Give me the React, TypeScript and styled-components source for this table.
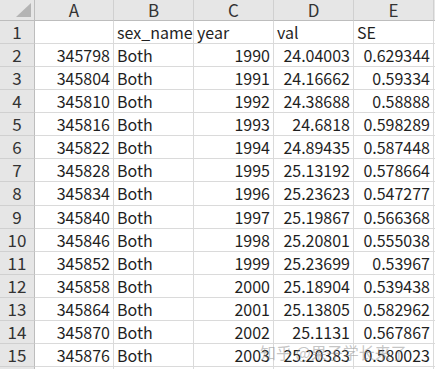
import { Fragment } from 'react';
import styled, { createGlobalStyle } from 'styled-components';

const GlobalStyle = createGlobalStyle`
	body {
		margin: 0;
		background: #ffffff;
		overflow: hidden;
	}
`;

type Row = {
	id: number;
	location: string;
	sex: string;
	year: string;
	val: string;
	se: string;
};

const header: Row = { id: 1, location: '', sex: 'sex_name', year: 'year', val: 'val', se: 'SE' };

const rows: Row[] = [
	{ id: 2, location: '345798', sex: 'Both', year: '1990', val: '24.04003', se: '0.629344' },
	{ id: 3, location: '345804', sex: 'Both', year: '1991', val: '24.16662', se: '0.59334' },
	{ id: 4, location: '345810', sex: 'Both', year: '1992', val: '24.38688', se: '0.58888' },
	{ id: 5, location: '345816', sex: 'Both', year: '1993', val: '24.6818', se: '0.598289' },
	{ id: 6, location: '345822', sex: 'Both', year: '1994', val: '24.89435', se: '0.587448' },
	{ id: 7, location: '345828', sex: 'Both', year: '1995', val: '25.13192', se: '0.578664' },
	{ id: 8, location: '345834', sex: 'Both', year: '1996', val: '25.23623', se: '0.547277' },
	{ id: 9, location: '345840', sex: 'Both', year: '1997', val: '25.19867', se: '0.566368' },
	{ id: 10, location: '345846', sex: 'Both', year: '1998', val: '25.20801', se: '0.555038' },
	{ id: 11, location: '345852', sex: 'Both', year: '1999', val: '25.23699', se: '0.53967' },
	{ id: 12, location: '345858', sex: 'Both', year: '2000', val: '25.18904', se: '0.539438' },
	{ id: 13, location: '345864', sex: 'Both', year: '2001', val: '25.13805', se: '0.582962' },
	{ id: 14, location: '345870', sex: 'Both', year: '2002', val: '25.1131', se: '0.567867' },
	{ id: 15, location: '345876', sex: 'Both', year: '2003', val: '25.20383', se: '0.580023' },
	{ id: 16, location: '', sex: '', year: '', val: '', se: '' },
];

const columns = ['A', 'B', 'C', 'D', 'E'];

const Sheet = styled.div`
	position: relative;
	display: grid;
	grid-template-columns: 35px 79px 80px 80px 80px 80px 80px;
	grid-template-rows: 21px;
	grid-auto-rows: 23.07px;
	font-family: 'Noto Sans CJK SC', 'Noto Sans', sans-serif;
	font-size: 16px;
	color: #1f1f1f;
	width: 435px;
	height: 369px;
	overflow: hidden;
`;

const Corner = styled.div`
	position: relative;
	background: #e6e6e6;
	border-right: 1px solid #bdbdbd;
	border-bottom: 1px solid #bdbdbd;
	box-sizing: border-box;

	&::after {
		content: '';
		position: absolute;
		right: 3px;
		bottom: 3px;
		width: 0;
		height: 0;
		border-left: 15px solid transparent;
		border-bottom: 14px solid #b4b4b4;
	}
`;

const ColHeader = styled.div`
	display: flex;
	align-items: center;
	justify-content: center;
	background: #e6e6e6;
	border-right: 1px solid #d0d0d0;
	border-bottom: 1px solid #bdbdbd;
	box-sizing: border-box;
	color: #333333;
	font-size: 17px;
	line-height: 20px;
`;

const RowHeader = styled.div`
	display: flex;
	align-items: center;
	justify-content: center;
	background: #e6e6e6;
	border-right: 1px solid #bdbdbd;
	border-bottom: 1px solid #d0d0d0;
	box-sizing: border-box;
	color: #333333;
	font-size: 17px;
	line-height: 22px;
`;

const Cell = styled.div<{ $align: 'left' | 'right' }>`
	display: flex;
	align-items: center;
	justify-content: ${(props) => (props.$align === 'right' ? 'flex-end' : 'flex-start')};
	padding: 0 3px;
	border-right: 1px solid #dadada;
	border-bottom: 1px solid #dadada;
	box-sizing: border-box;
	white-space: nowrap;
	line-height: 22px;
`;

const Watermark = styled.div`
	position: absolute;
	left: 260px;
	top: 342px;
	font-family: 'Noto Sans CJK SC', sans-serif;
	font-size: 16px;
	line-height: 20px;
	color: rgba(140, 140, 140, 0.5);
	white-space: nowrap;
	pointer-events: none;
`;

const App = () => {
	const renderRow = (row: Row, isHeader: boolean) => (
		<Fragment key={row.id}>
			<RowHeader>{row.id}</RowHeader>
			<Cell $align='right'>{row.location}</Cell>
			<Cell $align='left'>{row.sex}</Cell>
			<Cell $align={isHeader ? 'left' : 'right'}>{row.year}</Cell>
			<Cell $align={isHeader ? 'left' : 'right'}>{row.val}</Cell>
			<Cell $align={isHeader ? 'left' : 'right'}>{row.se}</Cell>
			<Cell $align='left' />
		</Fragment>
	);

	return (
		<>
			<GlobalStyle />
			<Sheet>
				<Corner />
				{columns.map((c) => (
					<ColHeader key={c}>{c}</ColHeader>
				))}
				<ColHeader />
				{renderRow(header, true)}
				{rows.map((row) => renderRow(row, false))}
				<Watermark>知乎 @果子学长来了</Watermark>
			</Sheet>
		</>
	);
};

export default App;
